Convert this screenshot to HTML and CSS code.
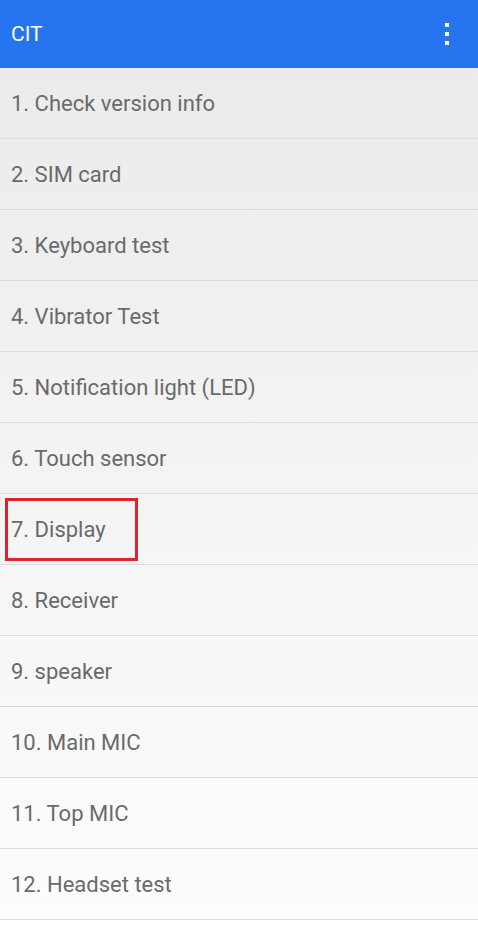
FILE: index.html
```html
<!DOCTYPE html>
<html lang="en">

<head>
    <meta charset="UTF-8">
    <meta name="viewport" content="width=device-width, initial-scale=1.0">
    <title>CIT</title>
    <link rel="stylesheet" href="styles.css">
</head>

<body>
    <div class="barra">
        <span class="titulo">CIT</span>
        <span class="menu">
            <svg width="6" height="24" viewBox="0 0 6 24">
                <rect x="1" y="1" width="4" height="4" fill="#fff" />
                <rect x="1" y="10" width="4" height="4" fill="#fff" />
                <rect x="1" y="19" width="4" height="4" fill="#fff" />
            </svg>
        </span>
    </div>

    <div class="lista">
        <div class="fila">1. Check version info</div>
        <div class="fila">2. SIM card</div>
        <div class="fila">3. Keyboard test</div>
        <div class="fila">4. Vibrator Test</div>
        <div class="fila">5. Notification light (LED)</div>
        <div class="fila">6. Touch sensor</div>
        <div class="fila marcado">7. Display</div>
        <div class="fila">8. Receiver</div>
        <div class="fila">9. speaker</div>
        <div class="fila">10. Main MIC</div>
        <div class="fila">11. Top MIC</div>
        <div class="fila">12. Headset test</div>
    </div>
</body>

</html>
```

FILE: styles.css
```css
body {
    margin: 0;
    font-family: Roboto, "Noto Sans", Arial, sans-serif;
    background-color: #ffffff;
}

.barra {
    height: 68px;
    background-color: #2674f0;
    display: flex;
    align-items: center;
    justify-content: space-between;
    padding: 0 28px 0 11px;
}

.titulo {
    color: #ffffff;
    font-size: 21px;
}

.menu {
    display: flex;
    align-items: center;
}

.lista {
    background: linear-gradient(#ebebeb, #fdfdfd);
}

.fila {
    height: 70px;
    border-bottom: 1px solid #dcdcdc;
    display: flex;
    align-items: center;
    padding-left: 11px;
    font-size: 22px;
    color: #6a6a6a;
    position: relative;
}

/* recuadro rojo alrededor del item */
.marcado::after {
    content: "";
    position: absolute;
    left: 5px;
    top: 4px;
    width: 127px;
    height: 57px;
    border: 3px solid #d9262e;
}
```
